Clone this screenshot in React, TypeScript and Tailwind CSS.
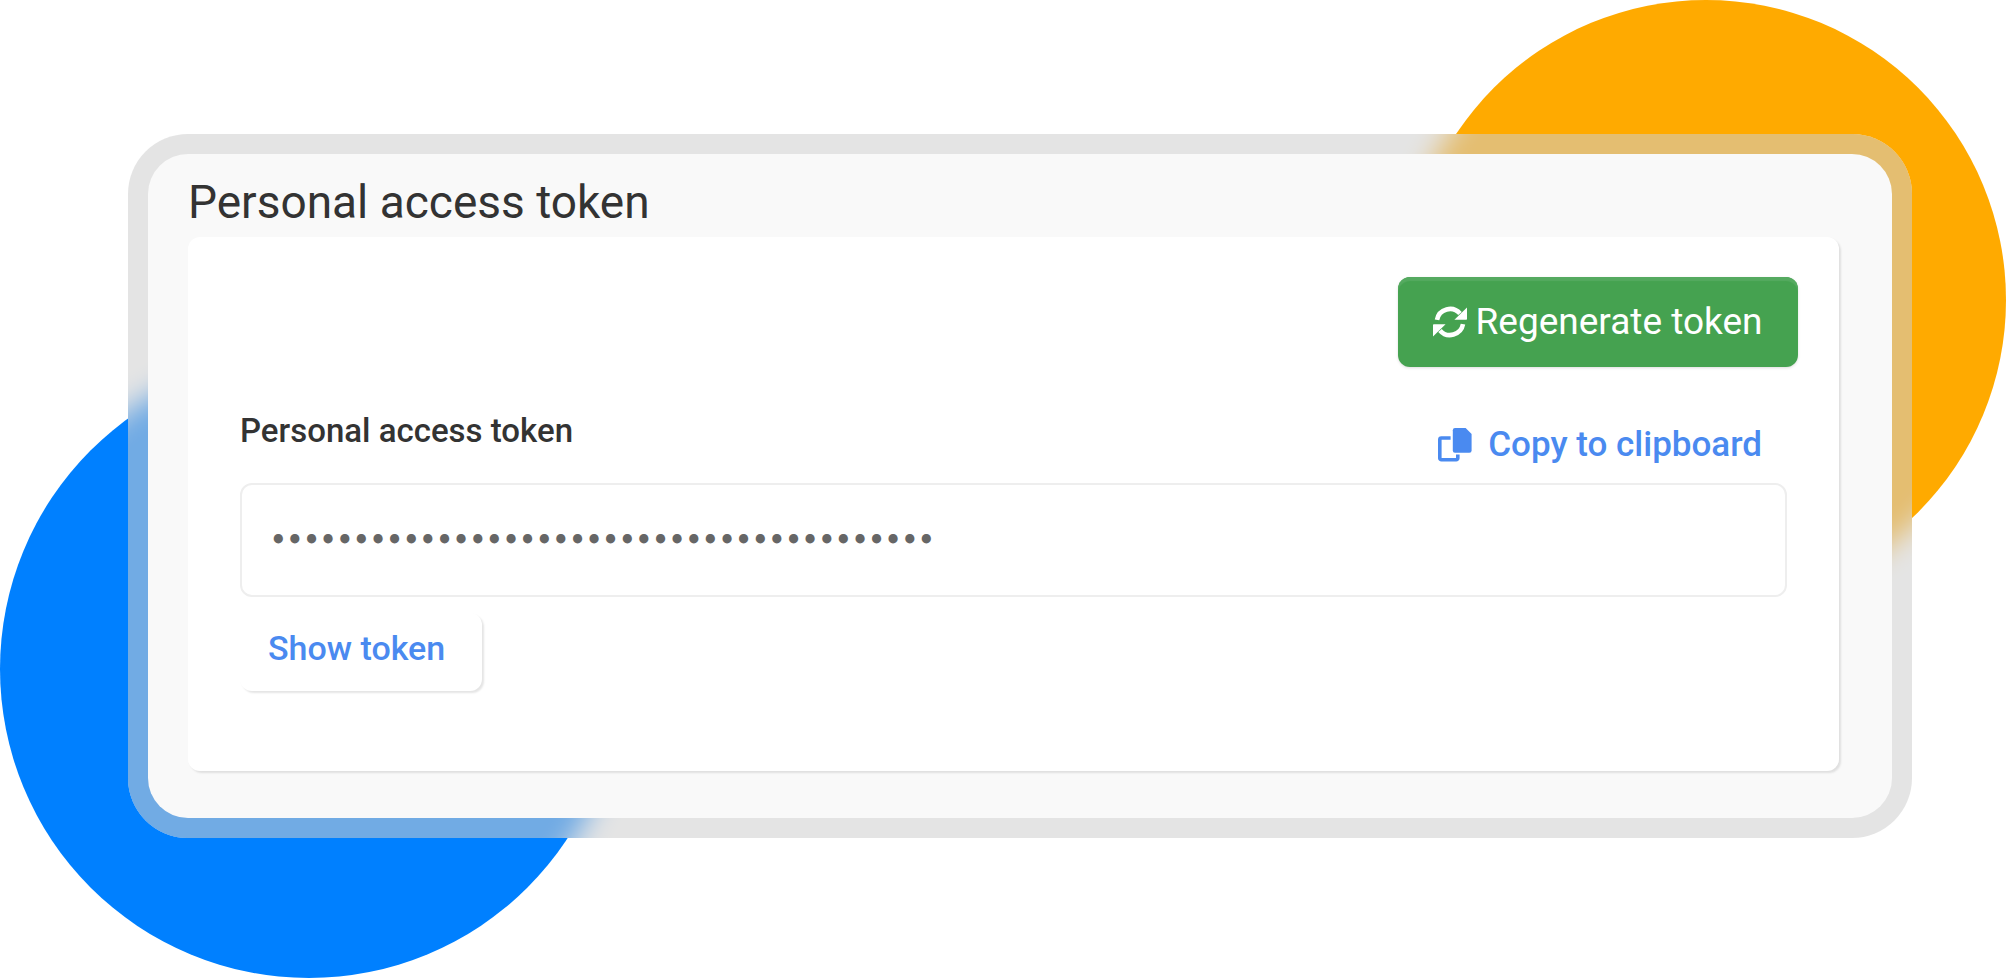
import { useState } from "react";

const TOKEN = "x".repeat(40)

const RefreshIcon = () => (
    <svg width="34" height="32" viewBox="0 0 34 32" fill="none" aria-hidden="true">
        <path d="M4 13.8A13.2 13.2 0 0 1 27 7.6" stroke="currentColor" strokeWidth="4.6" />
        <path d="M34 1.6V13a.8.8 0 0 1-.8.8H21.4z" fill="currentColor" />
        <path d="M30 18.2A13.2 13.2 0 0 1 7 24.4" stroke="currentColor" strokeWidth="4.6" />
        <path d="M0 30.4V19a.8.8 0 0 1 .8-.8H12.6z" fill="currentColor" />
    </svg>
)

const CopyIcon = () => (
    <svg width="34" height="34" viewBox="0 0 34 34" fill="none" aria-hidden="true">
        <path d="M12.6 10H3.4a1.6 1.6 0 0 0-1.6 1.6V30.2A1.6 1.6 0 0 0 3.4 31.8H18.2a1.6 1.6 0 0 0 1.6-1.6V26.6" stroke="currentColor" strokeWidth="3.6" />
        <path d="M17 0H27.6L33.6 6V22.6a2.2 2.2 0 0 1-2.2 2.2H17a2.2 2.2 0 0 1-2.2-2.2V2.2A2.2 2.2 0 0 1 17 0z" fill="currentColor" />
    </svg>
)

const App: React.FC = () => {
    const [token, setToken] = useState(TOKEN)
    const [shown, setShown] = useState(false)

    return (
        <main className="relative min-h-screen overflow-hidden bg-white pt-[134px] pr-[94px] pb-[140px] pl-32 font-[Roboto,sans-serif] text-[#333333]">
            <div className="absolute top-0 right-0 size-[600px] rounded-full bg-[#ffaa00]" />
            <div className="absolute bottom-0 left-0 size-[618px] rounded-full bg-[#0080ff]" />

            <div className="relative rounded-[60px] p-5">
                {/* frosted frame: soft copies of both circles under a grey veil */}
                <div className="absolute inset-0 overflow-hidden rounded-[60px] bg-white">
                    <div className="absolute -top-[140px] -right-[100px] size-[612px] rounded-full bg-[#ffaa00] blur-[14px]" />
                    <div className="absolute -bottom-[146px] -left-[134px] size-[630px] rounded-full bg-[#0080ff] blur-[14px]" />
                    <div className="absolute inset-0 bg-[#cecece]/55" />
                </div>

                <section className="relative rounded-[40px] bg-[#f9f9f9] pt-5 pr-[53px] pb-[47px] pl-10">
                    <h1 className="mb-[7px] text-[46px] leading-[56px]">Personal access token</h1>

                    <div className="rounded-xl bg-white pt-10 pb-20 shadow-[2px_2px_2px_#e0e0e0]">
                        <div className="flex justify-end px-[41px]">
                            <button
                                type="button"
                                className="flex h-[90px] w-[400px] items-center justify-center gap-2 rounded-xl bg-[#45a250] text-[37px] text-white shadow-[inset_0_4px_1px_#55aa60,0_1px_3px_#dddddd]"
                                onClick={() => setToken(TOKEN)}
                            >
                                <RefreshIcon />
                                Regenerate token
                            </button>
                        </div>

                        <div className="px-[52px]">
                            <div className="mt-11 flex h-[72px] justify-between leading-10 font-medium">
                                <label htmlFor="token" className="text-[33px]">Personal access token</label>
                                <button
                                    type="button"
                                    className="mt-3.5 mr-[25px] flex h-10 items-center gap-4 text-[35px] text-[#4a8af0]"
                                    onClick={() => navigator.clipboard.writeText(token)}
                                >
                                    <CopyIcon />
                                    Copy to clipboard
                                </button>
                            </div>
                            <input
                                id="token"
                                type={shown ? "text" : "password"}
                                value={token}
                                readOnly
                                className="h-[114px] w-full rounded-xl border-2 border-[#eeeeee] bg-white px-7 font-['DejaVu_Sans',sans-serif] text-[26px] font-bold text-[#666666]"
                            />
                            <button
                                type="button"
                                className="mt-4 flex h-[78px] w-[242px] items-center rounded-xl bg-white px-7 pb-2 text-[34px] font-medium text-[#4a8af0] shadow-[2px_2px_2px_#e5e5e5]"
                                onClick={() => setShown(!shown)}
                            >
                                Show token
                            </button>
                        </div>
                    </div>
                </section>
            </div>
        </main>
    )
}

export default App
